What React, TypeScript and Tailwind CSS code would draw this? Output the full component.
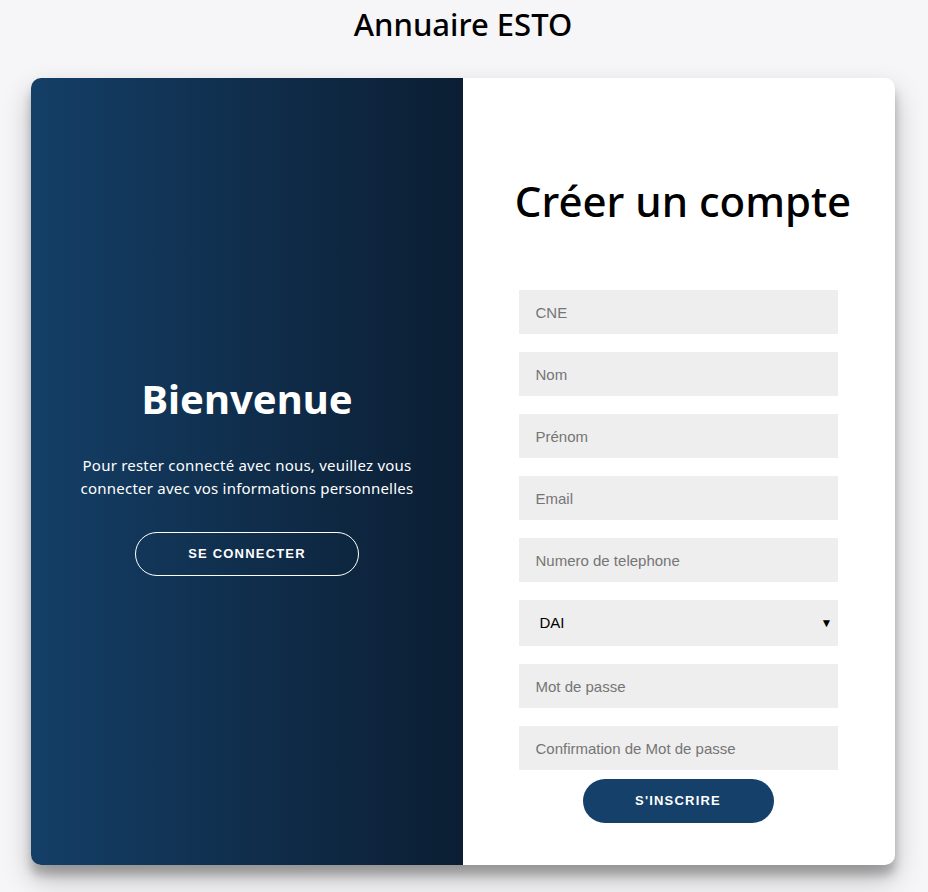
import React from 'react';

const fields = ['CNE', 'Nom', 'Prénom', 'Email', 'Numero de telephone'];

export default function App() {
  return (
    <div className="min-h-[892px] w-full bg-[#f6f5f7] flex flex-col items-center" style={{ fontFamily: '"Liberation Sans", Arial, sans-serif' }}>
      <h2 className="mt-[4px] h-[40px] text-[31px] leading-[40px] font-medium text-black ml-[-2px]" style={{ fontFamily: '"Noto Sans", sans-serif' }}>
        Annuaire ESTO
      </h2>

      <div className="mt-[34px] mr-[2px] flex w-[864px] h-[787px] rounded-[10px] overflow-hidden bg-white shadow-[0_14px_28px_rgba(0,0,0,0.25),0_10px_10px_rgba(0,0,0,0.22)]">
        {/* left panel */}
        <div className="w-[432px] h-full bg-gradient-to-r from-[#143f67] to-[#0b1e33] flex flex-col items-center pt-[293px] text-white">
          <h1 className="text-[40px] leading-[56px] font-bold" style={{ fontFamily: '"Noto Sans", sans-serif' }}>
            Bienvenue
          </h1>
          <p className="mt-[27px] text-center text-[15px] leading-[23px] tracking-[0.22px]" style={{ fontFamily: '"Noto Sans", sans-serif' }}>
            Pour rester connecté avec nous, veuillez vous
            <br />
            connecter avec vos informations personnelles
          </p>
          <button className="mt-[32px] w-[224px] h-[44px] rounded-full border border-white bg-transparent text-[13px] font-bold tracking-[1.2px] uppercase text-white">
            Se connecter
          </button>
        </div>

        {/* right panel */}
        <div className="w-[432px] h-full flex flex-col items-center pt-[92px]">
          <h1 className="h-[62px] ml-[8px] text-[42px] leading-[62px] font-medium text-black" style={{ fontFamily: '"Noto Sans", sans-serif' }}>
            Créer un compte
          </h1>
          <form className="mt-[58px] mr-[2px] flex flex-col items-center w-[319px]">
            {fields.map((f) => (
              <input
                key={f}
                type="text"
                placeholder={f}
                className="mb-[18px] w-full h-[44px] bg-[#eeeeee] pl-[17px] text-[15px] text-black placeholder-[#757575] outline-none"
              />
            ))}
            <div className="mb-[18px] w-full h-[46px] bg-[#eeeeee] flex items-center justify-between pl-[21px] pr-[5px] text-[15px] text-black">
              <span>DAI</span>
              <span className="text-[12px]">▼</span>
            </div>
            <input
              type="password"
              placeholder="Mot de passe"
              className="mb-[18px] w-full h-[44px] bg-[#eeeeee] pl-[17px] text-[15px] text-black placeholder-[#757575] outline-none"
            />
            <input
              type="password"
              placeholder="Confirmation de Mot de passe"
              className="w-full h-[44px] bg-[#eeeeee] pl-[17px] text-[15px] text-black placeholder-[#757575] outline-none"
            />
            <button
              type="button"
              className="mt-[9px] w-[191px] h-[44px] rounded-full bg-[#15406a] text-white text-[13px] font-bold tracking-[1.2px] uppercase"
            >
              S'inscrire
            </button>
          </form>
        </div>
      </div>
    </div>
  );
}
